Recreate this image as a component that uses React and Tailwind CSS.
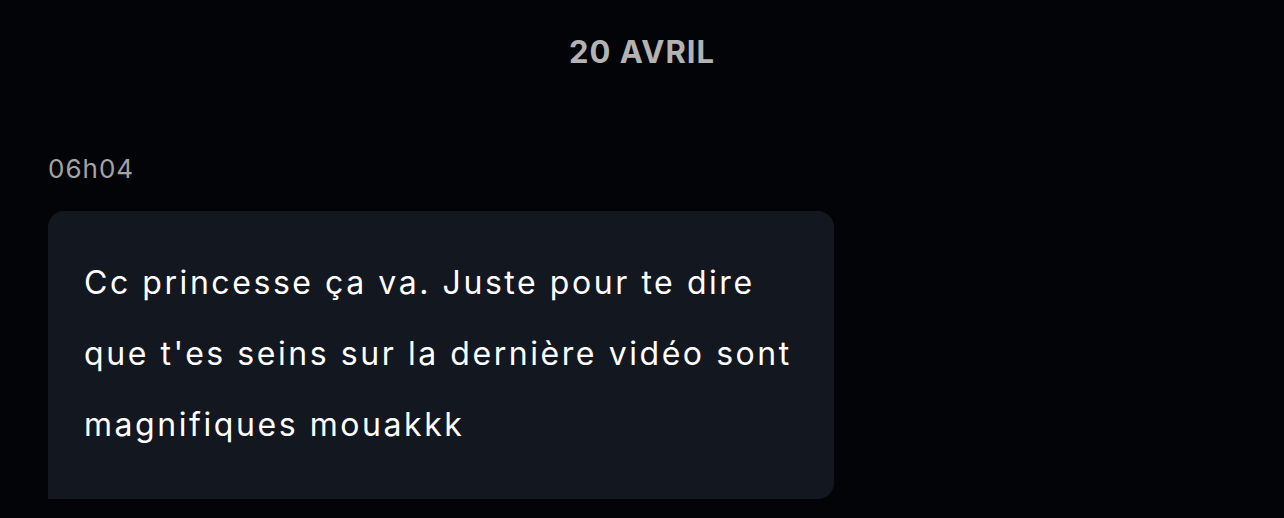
import React from 'react';

const App = () => {
  return (
    <div className="min-h-screen bg-[#030408] px-12 pt-8 font-['Inter',sans-serif]">
      <div className="text-center text-[31px] font-bold leading-[40px] tracking-[1px] text-[#b3b3b3]">
        20 AVRIL
      </div>

      <div className="mt-[81px] text-[26px] leading-[32px] tracking-[1px] text-[#a3a3a3]">06h04</div>

      <div className="mt-[26px] w-[786px] rounded-2xl rounded-bl-none bg-[#131720] px-9 pt-9 pb-[39px]">
        <p className="text-[32px] leading-[71px] tracking-[0.08em] text-white">
          Cc princesse ça va. Juste pour te dire que t'es seins sur la dernière vidéo sont magnifiques mouakkk
        </p>
      </div>
    </div>
  );
};

export default App;
